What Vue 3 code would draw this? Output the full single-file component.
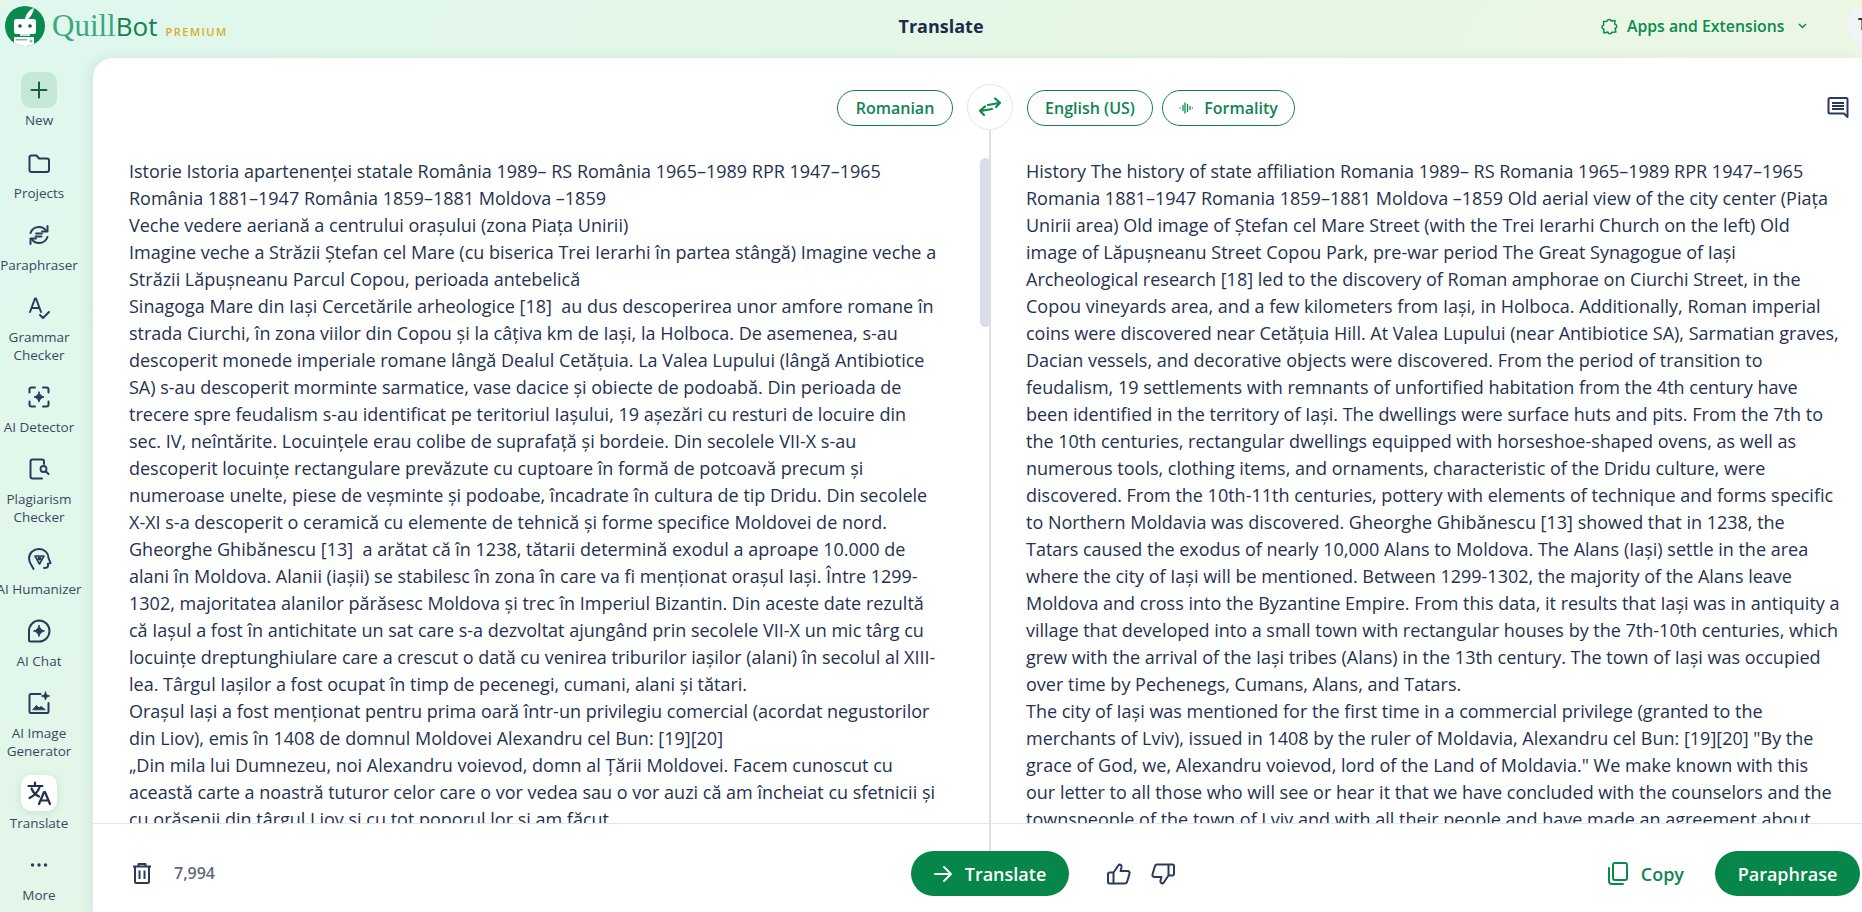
<script setup>
const leftLines = [
  'Istorie Istoria apartenenței statale România 1989– RS România 1965–1989 RPR 1947–1965',
  'România 1881–1947 România 1859–1881 Moldova –1859',
  'Veche vedere aeriană a centrului orașului (zona Piața Unirii)',
  'Imagine veche a Străzii Ștefan cel Mare (cu biserica Trei Ierarhi în partea stângă) Imagine veche a',
  'Străzii Lăpușneanu Parcul Copou, perioada antebelică',
  'Sinagoga Mare din Iași Cercetările arheologice [18]  au dus descoperirea unor amfore romane în',
  'strada Ciurchi, în zona viilor din Copou și la câțiva km de Iași, la Holboca. De asemenea, s-au',
  'descoperit monede imperiale romane lângă Dealul Cetățuia. La Valea Lupului (lângă Antibiotice',
  'SA) s-au descoperit morminte sarmatice, vase dacice și obiecte de podoabă. Din perioada de',
  'trecere spre feudalism s-au identificat pe teritoriul Iașului, 19 așezări cu resturi de locuire din',
  'sec. IV, neîntărite. Locuințele erau colibe de suprafață și bordeie. Din secolele VII-X s-au',
  'descoperit locuințe rectangulare prevăzute cu cuptoare în formă de potcoavă precum și',
  'numeroase unelte, piese de veșminte și podoabe, încadrate în cultura de tip Dridu. Din secolele',
  'X-XI s-a descoperit o ceramică cu elemente de tehnică și forme specifice Moldovei de nord.',
  'Gheorghe Ghibănescu [13]  a arătat că în 1238, tătarii determină exodul a aproape 10.000 de',
  'alani în Moldova. Alanii (iașii) se stabilesc în zona în care va fi menționat orașul Iași. Între 1299-',
  '1302, majoritatea alanilor părăsesc Moldova și trec în Imperiul Bizantin. Din aceste date rezultă',
  'că Iașul a fost în antichitate un sat care s-a dezvoltat ajungând prin secolele VII-X un mic târg cu',
  'locuințe dreptunghiulare care a crescut o dată cu venirea triburilor iașilor (alani) în secolul al XIII-',
  'lea. Târgul Iașilor a fost ocupat în timp de pecenegi, cumani, alani și tătari.',
  'Orașul Iași a fost menționat pentru prima oară într-un privilegiu comercial (acordat negustorilor',
  'din Liov), emis în 1408 de domnul Moldovei Alexandru cel Bun: [19][20]',
  '„Din mila lui Dumnezeu, noi Alexandru voievod, domn al Țării Moldovei. Facem cunoscut cu',
  'această carte a noastră tuturor celor care o vor vedea sau o vor auzi că am încheiat cu sfetnicii și',
  'cu orășenii din târgul Liov și cu tot poporul lor și am făcut',
]
const rightLines = [
  'History The history of state affiliation Romania 1989– RS Romania 1965–1989 RPR 1947–1965',
  'Romania 1881–1947 Romania 1859–1881 Moldova –1859 Old aerial view of the city center (Piața',
  'Unirii area) Old image of Ștefan cel Mare Street (with the Trei Ierarhi Church on the left) Old',
  'image of Lăpușneanu Street Copou Park, pre-war period The Great Synagogue of Iași',
  'Archeological research [18] led to the discovery of Roman amphorae on Ciurchi Street, in the',
  'Copou vineyards area, and a few kilometers from Iași, in Holboca. Additionally, Roman imperial',
  'coins were discovered near Cetățuia Hill. At Valea Lupului (near Antibiotice SA), Sarmatian graves,',
  'Dacian vessels, and decorative objects were discovered. From the period of transition to',
  'feudalism, 19 settlements with remnants of unfortified habitation from the 4th century have',
  'been identified in the territory of Iași. The dwellings were surface huts and pits. From the 7th to',
  'the 10th centuries, rectangular dwellings equipped with horseshoe-shaped ovens, as well as',
  'numerous tools, clothing items, and ornaments, characteristic of the Dridu culture, were',
  'discovered. From the 10th-11th centuries, pottery with elements of technique and forms specific',
  'to Northern Moldavia was discovered. Gheorghe Ghibănescu [13] showed that in 1238, the',
  'Tatars caused the exodus of nearly 10,000 Alans to Moldova. The Alans (Iași) settle in the area',
  'where the city of Iași will be mentioned. Between 1299-1302, the majority of the Alans leave',
  'Moldova and cross into the Byzantine Empire. From this data, it results that Iași was in antiquity a',
  'village that developed into a small town with rectangular houses by the 7th-10th centuries, which',
  'grew with the arrival of the Iași tribes (Alans) in the 13th century. The town of Iași was occupied',
  'over time by Pechenegs, Cumans, Alans, and Tatars.',
  'The city of Iași was mentioned for the first time in a commercial privilege (granted to the',
  'merchants of Lviv), issued in 1408 by the ruler of Moldavia, Alexandru cel Bun: [19][20] "By the',
  'grace of God, we, Alexandru voievod, lord of the Land of Moldavia." We make known with this',
  'our letter to all those who will see or hear it that we have concluded with the counselors and the',
  'townspeople of the town of Lviv and with all their people and have made an agreement about',
]
const nav = [
  { key: 'new', label: ['New'] },
  { key: 'projects', label: ['Projects'] },
  { key: 'para', label: ['Paraphraser'] },
  { key: 'grammar', label: ['Grammar', 'Checker'] },
  { key: 'detector', label: ['AI Detector'] },
  { key: 'plag', label: ['Plagiarism', 'Checker'] },
  { key: 'human', label: ['AI Humanizer'] },
  { key: 'chat', label: ['AI Chat'] },
  { key: 'image', label: ['AI Image', 'Generator'] },
  { key: 'translate', label: ['Translate'] },
  { key: 'more', label: ['More'] },
]
</script>

<template>
  <div class="app">
    <header class="topbar">
      <div class="brand">
        <svg class="logo" width="40" height="40" viewBox="0 0 40 40">
          <defs><clipPath id="lc"><circle cx="20" cy="20" r="20" /></clipPath></defs>
          <circle cx="20" cy="20" r="20" fill="#0b8a4e" />
          <g clip-path="url(#lc)">
            <path d="M20 13c1-5 4-9 9-11-1 5-3 9-7 12z" fill="#fff" />
            <rect x="9" y="13" width="22" height="15" rx="2.5" fill="#fff" />
            <circle cx="15" cy="20" r="1.8" fill="#0d5c3a" />
            <circle cx="25" cy="20" r="1.8" fill="#0d5c3a" />
            <rect x="15" y="28" width="10" height="2" fill="#cfe9dc" />
            <rect x="9" y="31" width="20" height="10" rx="1" fill="#fff" />
            <rect x="11" y="33" width="11" height="1.5" fill="#7fbf9f" />
            <circle cx="26" cy="35" r="1.5" fill="#7fbf9f" />
          </g>
        </svg>
        <span class="wordmark"><span class="quill">Quill</span><span class="bot">Bot</span></span>
        <span class="premium">PREMIUM</span>
      </div>
      <div class="title">Translate</div>
      <div class="top-right">
        <svg class="puzzle" width="17" height="17" viewBox="0 0 17 17" fill="none" stroke="#0b8a4e" stroke-width="1.5" stroke-linejoin="round">
          <path d="M2.500 3.500 6 3.200C6.300 1 9.700 .8 10.200 3l3.800-.5-.2 3.800c2.400.2 2.600 3.500.3 4l.8 3.700-4 .2c-.6 2.200-3.700 2-4-.1l-3.900.8-.3-3.900C.5 10.500.2 7.500 2.700 7z" />
        </svg>
        <span class="apps">Apps and Extensions</span>
        <svg width="9" height="6" viewBox="0 0 9 6" fill="none" stroke="#0b8a4e" stroke-width="1.5"><path d="M1 1l3.500 3.500L8 1" /></svg>
      </div>
      <div class="avatar"><span>T</span></div>
    </header>

    <div class="shell">
      <nav class="sidebar">
        <div v-for="item in nav" :key="item.key" class="nav-item" :class="'nav-' + item.key">
          <div class="nav-icon">
            <svg width="28" height="28" viewBox="0 0 28 28" fill="none" stroke="#2b3a5c" stroke-width="1.8" stroke-linecap="round" stroke-linejoin="round">
              <template v-if="item.key === 'new'">
                <path d="M14 6.5v15M6.500 14h15" stroke="#1f5a44" stroke-width="2" />
              </template>
              <template v-else-if="item.key === 'projects'">
                <path d="M4.500 8.500a2 2 0 0 1 2-2h5l2.500 3h8a2 2 0 0 1 2 2v9.500a2 2 0 0 1-2 2h-15.500a2 2 0 0 1-2-2z" stroke-width="2" />
              </template>
              <template v-else-if="item.key === 'para'">
                <path d="M5.500 12c1.500-4 5-6 8.500-6 3 0 5.500 1.300 7 3.800" stroke-width="2" />
                <path d="M22.500 5v5.500H17" stroke-width="2" />
                <path d="M22.500 16c-1.500 4-5 6-8.500 6-3 0-5.500-1.300-7-3.800" stroke-width="2" />
                <path d="M5.500 23v-5.500H11" stroke-width="2" />
                <path d="M11 12.500h6M10.500 15.500h6" stroke-width="1.8" />
              </template>
              <template v-else-if="item.key === 'grammar'">
                <path d="M5 19 10 5.500h1L16 19M7 15h7" stroke-width="2" />
                <path d="M15 22l3 3 6-6" stroke-width="2" />
              </template>
              <template v-else-if="item.key === 'detector'">
                <path d="M4.500 9.500V6.500a2 2 0 0 1 2-2H10M18 4.500h3.500a2 2 0 0 1 2 2v3M23.500 18.500v3a2 2 0 0 1-2 2H18M10 23.500H6.500a2 2 0 0 1-2-2v-3" stroke-width="2" />
                <path d="M14 9c.8 3 2 4.200 5 5-3 .8-4.200 2-5 5-.8-3-2-4.200-5-5 3-.8 4.200-2 5-5z" fill="#2b3a5c" stroke-width="1" />
              </template>
              <template v-else-if="item.key === 'plag'">
                <path d="M19 9V6.500a2 2 0 0 0-2-2H7.500a2 2 0 0 0-2 2v15a2 2 0 0 0 2 2h9.500" stroke-width="2" />
                <circle cx="18.500" cy="14" r="3" />
                <path d="M20.700 16.200 23.500 19" stroke-width="2" />
              </template>
              <template v-else-if="item.key === 'human'">
                <path d="M8.500 24c-.5-2.500-4.500-5-4.500-10.500C4 8 8.500 4 14 4c5.500 0 9.500 4 9.500 9l2 5-2.500.8V21c0 1.500-1 2-4 2" stroke-width="2" />
                <path d="M10 11h9l-4.500 8z" stroke-width="1.6" />
                <circle cx="14.500" cy="13.500" r="1.2" fill="#2b3a5c" />
              </template>
              <template v-else-if="item.key === 'chat'">
                <path d="M14 3.500a10.500 10.500 0 1 1 0 21H5.500a1.500 1.500 0 0 1-1.500-1.500V14A10.500 10.500 0 0 1 14 3.500z" stroke-width="2" />
                <path d="M14 8.500c.7 3.200 2.300 4.800 5.500 5.500-3.200.7-4.800 2.300-5.500 5.500-.7-3.200-2.300-4.800-5.500-5.500 3.200-.7 4.800-2.300 5.500-5.500z" fill="#2b3a5c" stroke-width="1" />
              </template>
              <template v-else-if="item.key === 'image'">
                <path d="M15.500 5H6a1.500 1.500 0 0 0-1.500 1.500v16A1.500 1.500 0 0 0 6 24h16a1.500 1.500 0 0 0 1.500-1.500V14" stroke-width="2" />
                <path d="M8 20.500l3.500-4 2.500 2.500 2-1.500 4 3z" fill="#2b3a5c" stroke-width="1" />
                <path d="M20.500 3c.5 2.500 1.500 3.500 4 4-2.500.5-3.500 1.500-4 4-.5-2.500-1.500-3.500-4-4 2.500-.5 3.500-1.500 4-4z" fill="#2b3a5c" stroke-width="1" />
              </template>
              <template v-else-if="item.key === 'translate'">
                <path d="M3.500 7h14M10 3.500V7M15 7c-1.500 5-5.500 9.500-10.500 12M6.500 9.500c1.500 4 4.500 6.500 7.500 8" stroke="#22304f" stroke-width="2.2" />
                <path d="M14 25l5-12h1l5 12M15.800 21.500h7.400" stroke="#22304f" stroke-width="2.2" />
              </template>
              <template v-else>
                <circle cx="7.500" cy="14" r="1.7" fill="#2b3a5c" stroke="none" />
                <circle cx="14" cy="14" r="1.7" fill="#2b3a5c" stroke="none" />
                <circle cx="20.500" cy="14" r="1.7" fill="#2b3a5c" stroke="none" />
              </template>
            </svg>
          </div>
          <div class="nav-label">
            <div v-for="l in item.label" :key="l">{{ l }}</div>
          </div>
        </div>
      </nav>

      <main class="card">
        <div class="toolbar">
          <div class="tool-left">
            <button class="chip chip-ro">Romanian</button>
          </div>
          <div class="tool-right">
            <button class="chip chip-en">English (US)</button>
            <button class="chip chip-form">
              <svg width="14" height="12" viewBox="0 0 14 12" fill="none" stroke="#0b8a4e" stroke-width="1.3" stroke-linecap="round">
                <path d="M1 6h.1M4 3.500v5M6 1v10M8.500 2.500v7M11 4.500v3M13.300 6h.1" />
              </svg>
              Formality
            </button>
            <svg class="comment" width="24" height="22" viewBox="0 0 24 22" fill="none">
              <path d="M2.500 2.500a1.500 1.500 0 0 1 1.500-1.500h16a1.500 1.500 0 0 1 1.500 1.500V20l-3.500-3.500H4a1.500 1.500 0 0 1-1.500-1.500z" stroke="#2b3a5c" stroke-width="2" stroke-linejoin="round" />
              <path d="M6 6h12M6 9h12M6 12h12" stroke="#2b3a5c" stroke-width="1.8" />
            </svg>
          </div>
          <div class="swap">
            <svg width="26" height="22" viewBox="0 0 26 22" fill="none" stroke="#0b8a4e" stroke-width="2.2" stroke-linecap="round" stroke-linejoin="round">
              <path d="M11 9 22 7M18 2.500 23 6.800 19 11" />
              <path d="M15 13 4 15M8 10.500 3 14.800 7 19" />
            </svg>
          </div>
        </div>

        <div class="panes">
          <div class="pane pane-left">
            <div v-for="(l, i) in leftLines" :key="i" class="line">{{ l }}</div>
          </div>
          <div class="pane pane-right">
            <div v-for="(l, i) in rightLines" :key="i" class="line">{{ l }}</div>
          </div>
          <div class="thumb"></div>
        </div>

        <footer class="footer">
          <div class="foot-left">
            <svg width="20" height="22" viewBox="0 0 20 22" fill="none" stroke="#2b3a5c" stroke-width="2" stroke-linejoin="round">
              <path d="M1 4.500h18M6.500 4.500V2h7v2.500M3 4.500v15a1.500 1.500 0 0 0 1.500 1.500h11a1.500 1.500 0 0 0 1.500-1.500v-15M7.500 8.500v8.500M12.500 8.500v8.500" />
            </svg>
            <span class="count">7,994</span>
          </div>
          <div class="foot-mid">
            <button class="btn btn-translate">
              <svg width="18" height="16" viewBox="0 0 18 16" fill="none" stroke="#fff" stroke-width="1.8" stroke-linecap="round" stroke-linejoin="round">
                <path d="M1 8h16M10 1l7 7-7 7" />
              </svg>
              Translate
            </button>
            <svg class="thumbs-up" width="24" height="22" viewBox="0 0 24 22" fill="none" stroke="#2b3a5c" stroke-width="2" stroke-linejoin="round">
              <path d="M6.500 9.500v11H2.500a1.500 1.500 0 0 1-1.500-1.500v-8a1.500 1.500 0 0 1 1.500-1.500zM6.500 9.500 12 1.500c2 0 3 1.300 2.500 3l-1 3.500h7c1.500 0 2.500 1.200 2 2.700l-2.500 8.300c-.3 1-1 1.500-2 1.500H6.500" />
            </svg>
            <svg class="thumbs-down" width="24" height="22" viewBox="0 0 24 22" fill="none" stroke="#2b3a5c" stroke-width="2" stroke-linejoin="round">
              <path d="M17.500 12.500v-11h4a1.500 1.500 0 0 1 1.500 1.500v8a1.500 1.500 0 0 1-1.500 1.500zM17.500 12.500 12 20.500c-2 0-3-1.300-2.500-3l1-3.500h-7c-1.500 0-2.500-1.200-2-2.700l2.500-8.300c.3-1 1-1.500 2-1.500h11.500" />
            </svg>
          </div>
          <div class="foot-right">
            <svg width="21" height="23" viewBox="0 0 21 23" fill="none" stroke="#0b8a4e" stroke-width="2" stroke-linejoin="round" stroke-linecap="round">
              <rect x="6" y="1" width="14" height="17" rx="2" />
              <path d="M2 6v13a3 3 0 0 0 3 3h11" />
            </svg>
            <span class="copy">Copy</span>
            <button class="btn btn-para">Paraphrase</button>
          </div>
        </footer>
      </main>
    </div>
  </div>
</template>

<style>
html, body { margin: 0; padding: 0; overflow: hidden; }
</style>

<style scoped>
.app {
  width: 1862px;
  height: 912px;
  overflow: hidden;
  display: flex;
  flex-direction: column;
  font-family: "Open Sans", "Noto Sans", sans-serif;
  color: #24324f;
  background: linear-gradient(120deg, #dff7ee 0%, #e6f7e4 50%, #eff7e3 100%);
}
button { font-family: inherit; cursor: pointer; }

.topbar {
  height: 58px;
  flex: none;
  position: relative;
  display: flex;
  align-items: center;
}
.brand {
  display: flex;
  align-items: center;
  padding-left: 5px;
  width: 300px;
  height: 52px;
  flex: none;
  position: absolute;
  left: 0;
  top: 0;
}
.logo { flex: none; }
.wordmark {
  margin-left: 7px;
  font-family: "Liberation Serif", serif;
  font-size: 31px;
  line-height: 40px;
  white-space: nowrap;
}
.quill { color: #3ca77e; }
.bot { color: #11824f; font-family: "Open Sans", sans-serif; font-size: 26px; }
.premium {
  margin-left: 8px;
  margin-top: 10px;
  font-size: 11px;
  font-weight: 600;
  letter-spacing: 1.5px;
  color: #dcaa27;
}
.title {
  position: absolute;
  left: 0;
  width: 1882px;
  top: 12px;
  line-height: 28px;
  text-align: center;
  font-size: 18px;
  font-weight: 700;
  color: #1a2b4c;
}
.top-right {
  position: absolute;
  left: 1601px;
  top: 12px;
  height: 28px;
  display: flex;
  align-items: center;
}
.puzzle { margin-right: 9px; }
.apps { font-size: 15.8px; font-weight: 600; color: #0b8a4e; margin-right: 14px; }
.avatar {
  position: absolute;
  left: 1848px;
  top: 4px;
  width: 44px;
  height: 44px;
  border-radius: 50%;
  background: #f1f4f6;
  font-size: 16px;
  font-weight: 700;
  color: #24324f;
}
.avatar span { position: absolute; left: 10px; top: 9px; }

.shell { flex: 1; display: flex; min-height: 0; }
.sidebar {
  width: 93px;
  flex: none;
  display: flex;
  flex-direction: column;
  align-items: center;
  gap: 15px;
  padding-top: 14px;
  box-sizing: border-box;
}
.nav-item {
  display: flex;
  flex-direction: column;
  align-items: center;
  width: 93px;
  margin-left: -15px;
}
.nav-new { margin-bottom: 1px; }
.nav-icon {
  width: 36px;
  height: 36px;
  display: flex;
  align-items: center;
  justify-content: center;
  border-radius: 10px;
  margin-bottom: 3px;
}
.nav-new .nav-icon { background: #c5e8d6; }
.nav-translate .nav-icon { background: #fff; box-shadow: 0 2px 8px rgba(30, 70, 50, 0.12); }
.nav-label {
  font-size: 13.5px;
  line-height: 18px;
  text-align: center;
  color: #3b4861;
  white-space: nowrap;
}
.card {
  flex: 1;
  min-width: 0;
  background: #fff;
  border-top-left-radius: 20px;
  box-shadow: -4px 0 12px rgba(40, 80, 60, 0.08);
  display: flex;
  flex-direction: column;
  position: relative;
}
.toolbar {
  height: 100px;
  flex: none;
  display: flex;
  position: relative;
  padding-top: 32px;
  box-sizing: border-box;
  align-items: flex-start;
}
.tool-left {
  width: 897px;
  flex: none;
  display: flex;
  justify-content: flex-end;
  padding-right: 37px;
  box-sizing: border-box;
}
.tool-right {
  flex: 1;
  display: flex;
  gap: 9px;
  padding-left: 37px;
  padding-right: 12px;
  align-items: center;
}
.chip {
  height: 36px;
  border: 1.2px solid #0f8452;
  border-radius: 18px;
  background: #fff;
  color: #0f8452;
  font-size: 16px;
  font-weight: 600;
  display: inline-flex;
  align-items: center;
  justify-content: center;
  box-sizing: border-box;
  padding: 0;
}
.chip-ro { width: 116px; }
.chip-en { width: 126px; }
.chip-form { width: 133px; gap: 11px; }
.comment { margin-left: auto; }
.swap {
  position: absolute;
  left: 874px;
  top: 26px;
  width: 46px;
  height: 46px;
  border-radius: 50%;
  border: 1px solid #e3e5e8;
  background: #fff;
  box-sizing: border-box;
  display: flex;
  align-items: center;
  justify-content: center;
  z-index: 2;
}
.panes {
  flex: 1;
  min-height: 0;
  display: flex;
  overflow: hidden;
  position: relative;
}
.pane {
  font-size: 18px;
  line-height: 27px;
  color: #24324f;
  box-sizing: border-box;
  padding-left: 36px;
  height: 100%;
  overflow: hidden;
}
.pane-left { width: 897px; flex: none; }
.pane-right { flex: 1; }
.line { white-space: pre; }
.panes::before {
  content: "";
  position: absolute;
  left: 896px;
  top: 0;
  bottom: 0;
  width: 2px;
  background: #dfe1e5;
}
.thumb {
  position: absolute;
  left: 887px;
  top: 0;
  width: 11px;
  height: 169px;
  border-radius: 6px;
  background: #dadde5;
}
.toolbar::after {
  content: "";
  position: absolute;
  left: 896px;
  top: 70px;
  bottom: 0;
  width: 2px;
  background: #dfe1e5;
}
.footer {
  height: 89px;
  flex: none;
  border-top: 1px solid #e3e5e8;
  box-sizing: border-box;
  display: flex;
  position: relative;
  background: #fff;
}
.foot-left {
  position: absolute;
  left: 39px;
  top: 38px;
  display: flex;
  align-items: center;
  gap: 22px;
}
.count { font-size: 16px; font-weight: 600; color: #5f6b7c; }
.foot-mid {
  position: absolute;
  left: 818px;
  top: 27px;
  display: flex;
  align-items: center;
}
.foot-mid::before {
  content: "";
  position: absolute;
  left: 78px;
  top: -27px;
  height: 27px;
  width: 2px;
  background: #dfe1e5;
}
.btn {
  height: 45px;
  border: 0;
  border-radius: 23px;
  background: #07864a;
  color: #fff;
  font-size: 18px;
  font-weight: 600;
  display: inline-flex;
  align-items: center;
  justify-content: center;
}
.btn-translate { width: 158px; gap: 13px; }
.thumbs-up { margin-left: 38px; }
.thumbs-down { margin-left: 20px; }
.foot-right {
  position: absolute;
  right: 2px;
  top: 27px;
  display: flex;
  align-items: center;
}
.copy { font-size: 18px; font-weight: 600; color: #0f8452; margin-left: 13px; margin-right: 31px; }
.btn-para { width: 145px; }
</style>
